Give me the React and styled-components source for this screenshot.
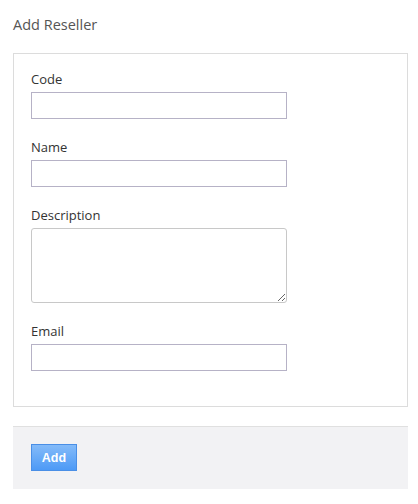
import React from 'react';
import styled, { createGlobalStyle } from 'styled-components';

const GlobalStyle = createGlobalStyle`
  body {
    margin: 0;
    background: #fff;
    font-family: "Open Sans", "Noto Sans", sans-serif;
  }
`;

const Page = styled.div`
  padding: 0 10px 0 13px;
  width: 395px;
`;

const Title = styled.h1`
  margin: 0;
  padding-top: 15px;
  height: 38px;
  font-size: 14.5px;
  font-weight: 400;
  color: #555;
  line-height: 20px;
`;

const Panel = styled.div`
  border: 1px solid #dcdcdc;
  padding: 16px 17px 16px;
`;

const Field = styled.div`
  margin-bottom: 19px;
`;

const Label = styled.label`
  display: block;
  font-size: 13px;
  line-height: 18px;
  color: #333;
  margin-bottom: 4px;
`;

const Input = styled.input`
  display: block;
  box-sizing: border-box;
  width: 256px;
  height: 27px;
  border: 1px solid #b6b2c6;
  border-radius: 0;
  padding: 3px 6px;
  font: inherit;
  font-size: 13px;
  outline: none;
`;

const TextArea = styled.textarea`
  display: block;
  box-sizing: border-box;
  width: 256px;
  height: 75px;
  border: 1px solid #c8c8c8;
  border-radius: 3px;
  padding: 4px 6px;
  font: inherit;
  font-size: 13px;
  outline: none;
`;

const Footer = styled.div`
  margin-top: 19px;
  border-top: 1px solid #e0e0e0;
  background: #f2f2f4;
  padding: 17px 18px 18px;
`;

const Button = styled.button`
  box-sizing: border-box;
  width: 46px;
  height: 27px;
  border: 1px solid #4a8fe6;
  background: linear-gradient(#84bbf9, #4d9af6);
  color: #fff;
  font-family: "Liberation Sans", Arial, sans-serif;
  font-size: 12.5px;
  font-weight: 700;
  padding: 0;
  cursor: pointer;
`;

const fields = [
  { name: 'Code' },
  { name: 'Name' },
  { name: 'Description', multi: true },
  { name: 'Email' },
];

export default function App() {
  return (
    <>
      <GlobalStyle />
      <Page>
        <Title>Add Reseller</Title>
        <Panel>
          {fields.map((f) => (
            <Field key={f.name}>
              <Label>{f.name}</Label>
              {f.multi ? <TextArea /> : <Input type="text" />}
            </Field>
          ))}
        </Panel>
        <Footer>
          <Button>Add</Button>
        </Footer>
      </Page>
    </>
  );
}
